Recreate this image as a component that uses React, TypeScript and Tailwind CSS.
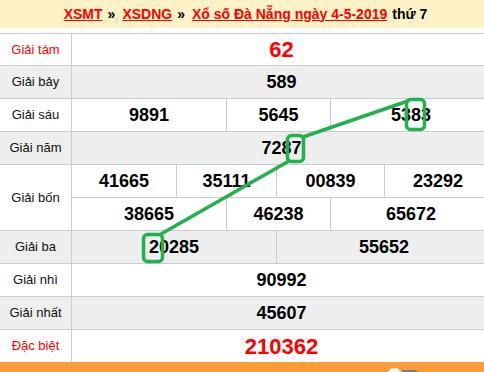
import React from "react";

const Label = ({ children, red = false, tall = false }: { children: React.ReactNode; red?: boolean; tall?: boolean }) => (
  <div
    className={`w-[72px] shrink-0 border-r border-[#cccccc] flex items-center justify-center text-[13px] ${
      red ? "text-[#ff0000]" : "text-[#111111]"
    } ${tall ? "h-[66px] border-b" : "h-full"}`}
  >
    {children}
  </div>
);

const Num = ({ children, className = "", big = false }: { children: React.ReactNode; className?: string; big?: boolean }) => (
  <div
    className={`h-full flex items-center justify-center font-bold ${
      big ? "text-[22px] text-[#ff0000]" : "text-[18px] text-black"
    } ${className}`}
  >
    {children}
  </div>
);

export default function App() {
  return (
    <div className="relative w-[484px] h-[372px] overflow-hidden bg-white font-['Liberation_Sans',Arial,sans-serif]">
      <div className="w-[491px]">
        <div className="h-[28px] bg-[#fdf2c6] flex items-center justify-center text-[14px] font-bold text-black">
          <span className="text-[#ff0000] underline">XSMT</span>
          <span className="ml-[5px] mr-[7px]">»</span>
          <span className="text-[#ff0000] underline">XSDNG</span>
          <span className="ml-[5px] mr-[7px]">»</span>
          <span className="text-[#ff0000] underline">Xổ số Đà Nẵng ngày 4-5-2019</span>
          <span className="ml-[5px]">thứ 7</span>
        </div>
        <div className="mt-[5px] border-t border-[#cccccc]">
          <div className="flex h-[32px] border-b border-[#cccccc] bg-white">
            <Label red>Giải tám</Label>
            <Num big className="flex-1">62</Num>
          </div>
          <div className="flex h-[33px] border-b border-[#cccccc] bg-[#eeeeee]">
            <Label>Giải bảy</Label>
            <Num className="flex-1">589</Num>
          </div>
          <div className="flex h-[33px] border-b border-[#cccccc] bg-white">
            <Label>Giải sáu</Label>
            <Num className="w-[155px] border-r border-[#cccccc]">9891</Num>
            <Num className="w-[104px] border-r border-[#cccccc]">5645</Num>
            <Num className="flex-1">5383</Num>
          </div>
          <div className="flex h-[33px] border-b border-[#cccccc] bg-[#eeeeee]">
            <Label>Giải năm</Label>
            <Num className="flex-1">7287</Num>
          </div>
          <div className="flex bg-white">
            <Label tall>Giải bốn</Label>
            <div className="flex-1 flex flex-col">
              <div className="flex h-[33px] border-b border-[#cccccc]">
                <Num className="w-[105px] border-r border-[#cccccc]">41665</Num>
                <Num className="w-[100px] border-r border-[#cccccc]">35111</Num>
                <Num className="w-[108px] border-r border-[#cccccc]">00839</Num>
                <Num className="flex-1">23292</Num>
              </div>
              <div className="flex h-[33px] border-b border-[#cccccc]">
                <Num className="w-[155px] border-r border-[#cccccc]">38665</Num>
                <Num className="w-[104px] border-r border-[#cccccc]">46238</Num>
                <Num className="flex-1">65672</Num>
              </div>
            </div>
          </div>
          <div className="flex h-[33px] border-b border-[#cccccc] bg-[#eeeeee]">
            <Label>Giải ba</Label>
            <Num className="w-[205px] border-r border-[#cccccc]">20285</Num>
            <Num className="flex-1">55652</Num>
          </div>
          <div className="flex h-[33px] border-b border-[#cccccc] bg-white">
            <Label>Giải nhì</Label>
            <Num className="flex-1">90992</Num>
          </div>
          <div className="flex h-[33px] border-b border-[#cccccc] bg-[#eeeeee]">
            <Label>Giải nhất</Label>
            <Num className="flex-1">45607</Num>
          </div>
          <div className="flex h-[32px] bg-white">
            <Label red>Đặc biệt</Label>
            <Num big className="flex-1">210362</Num>
          </div>
        </div>
        <div className="h-[20px] bg-[#fc9c35] flex items-start pl-[387px] pt-[6px]">
          <div className="w-[15px] h-[15px] rounded-full bg-white" />
          <div className="w-[18px] h-[12px] mt-[2px] rounded-r-full bg-[#7a7a7a]" />
        </div>
      </div>
      <svg className="absolute left-0 top-0 pointer-events-none" width="484" height="372" viewBox="0 0 484 372">
        <g fill="none" stroke="#22b14c" strokeWidth="3.5" strokeLinejoin="round" strokeLinecap="round">
          <rect x="406.5" y="99.5" width="18" height="30" rx="4" />
          <rect x="287.5" y="135.5" width="16" height="26" rx="4" />
          <rect x="143.5" y="234.5" width="19" height="27" rx="4" />
          <line x1="408" y1="101" x2="303" y2="137" />
          <line x1="289" y1="161" x2="161" y2="234" />
        </g>
      </svg>
    </div>
  );
}
